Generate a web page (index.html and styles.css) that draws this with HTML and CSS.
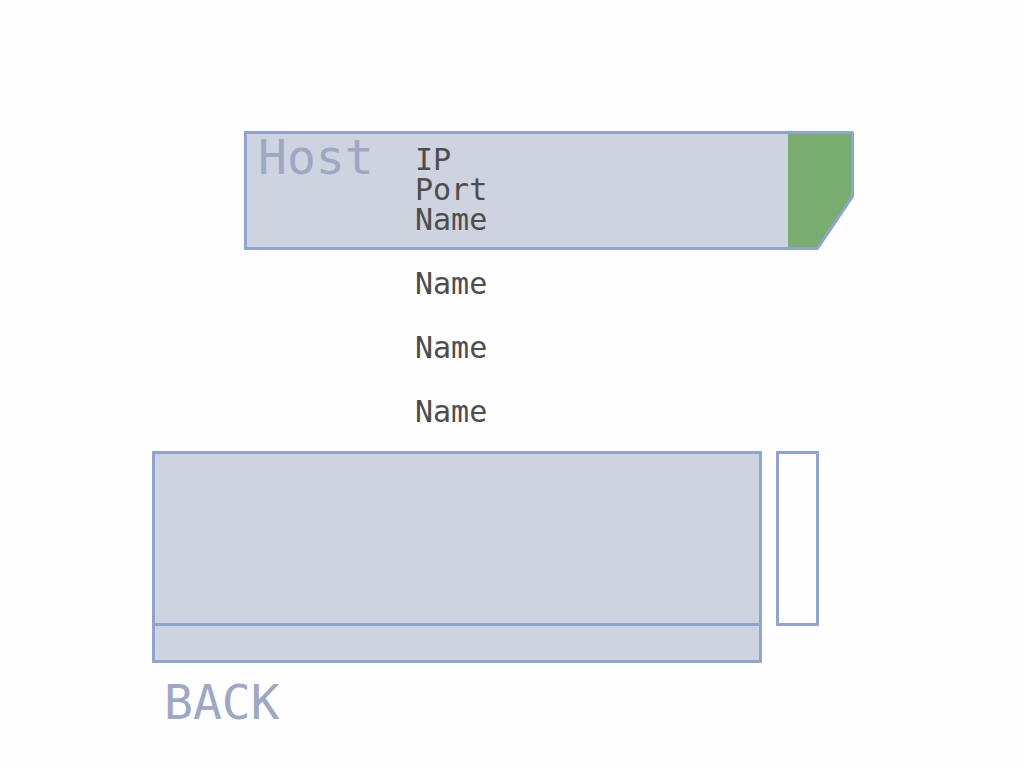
FILE: index.html
```html
<!DOCTYPE html>
<html lang="en">
<head>
<meta charset="utf-8">
<meta name="viewport" content="width=device-width, initial-scale=1">
<title>Lobby</title>
<link rel="stylesheet" href="styles.css">
</head>
<body>
<main class="lobby">
  <section class="host-card">
    <div class="host-body">
      <h1 class="host-title">Host</h1>
      <ul class="host-info">
        <li>IP</li>
        <li>Port</li>
        <li>Name</li>
      </ul>
    </div>
    <button class="ready" type="button" aria-label="Ready">
      <svg class="ready-shape" viewBox="0 0 66 119" preserveAspectRatio="none" aria-hidden="true">
        <path d="M0 1.5H64.5V65.5L29.5 117.5H0Z" fill="#79ad70"/>
        <path d="M0 1.5H64.5V65.5L29.5 117.5H0" fill="none" stroke="#8ea4d4" stroke-width="3" stroke-linejoin="round"/>
      </svg>
    </button>
  </section>
  <ul class="players">
    <li>Name</li>
    <li>Name</li>
    <li>Name</li>
  </ul>
  <section class="chat">
    <div class="chat-box">
      <div class="chat-log" role="log" aria-label="Messages"></div>
      <input class="chat-input" type="text" aria-label="Message">
    </div>
    <div class="chat-side"></div>
  </section>
  <button class="back" type="button">BACK</button>
</main>
</body>
</html>
```
FILE: styles.css
```css
* {
  box-sizing: border-box;
}

body {
  margin: 0;
  background: #fefefe;
  color: #4d4d4d;
  font-family: "DejaVu Sans Mono", monospace;
  font-size: 30px;
}

ul {
  margin: 0;
  padding: 0;
  list-style: none;
}

button {
  padding: 0;
  border: 0;
  background: none;
  font-family: inherit;
  cursor: pointer;
}

.lobby {
  padding: 131px 170px 24px 152px;
}

.host-card {
  display: flex;
  margin-left: 92px;
}

.host-body {
  flex: 1;
  display: grid;
  grid-template-columns: 157px 1fr;
  padding-left: 11px;
  background: #cdd3df;
  border: 3px solid #8ea4d4;
  border-right: 0;
  border-radius: 1px 0 0 1px;
}

.host-title {
  margin: 0;
  color: #9da8c4;
  font-size: 48px;
  font-weight: 400;
  line-height: 46px;
}

.host-info {
  padding: 11px 0 12px;
  line-height: 30px;
}

.ready {
  display: flex;
  width: 66px;
}

.ready-shape {
  width: 100%;
  height: 100%;
}

.players {
  margin: 2px 0 7px 263px;
  line-height: 64px;
}

.chat {
  display: flex;
  align-items: flex-start;
  gap: 14px;
  margin-right: 35px;
}

.chat-box {
  flex: 1;
  border: 3px solid #8ea4d4;
  border-radius: 1px;
  background: #cdd3df;
}

.chat-log {
  height: 169px;
}

.chat-input {
  display: block;
  width: 100%;
  height: 37px;
  padding: 0 8px;
  border: 0;
  border-top: 3px solid #8ea4d4;
  background: none;
  color: inherit;
  font-family: inherit;
  font-size: 24px;
}

.chat-side {
  width: 43px;
  height: 175px;
  border: 3px solid #8ea4d4;
  border-radius: 1px;
}

.back {
  display: block;
  margin: 16px 0 0 12px;
  color: #9da8c4;
  font-size: 48px;
  line-height: 46px;
}
```
